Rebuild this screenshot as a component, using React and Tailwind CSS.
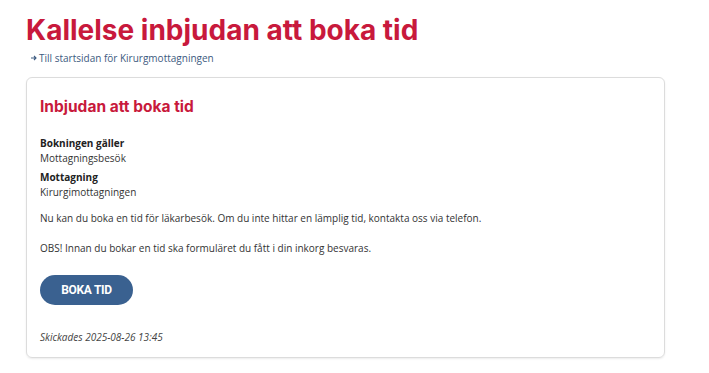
export default function App() {
  return (
    <div className="min-h-screen bg-white px-[26px] pt-[11px] font-['Open_Sans',sans-serif] text-[#333]">
      <h1 className="font-['Inter',sans-serif] text-[28px] font-bold leading-[38px] text-[#c8193c]">
        Kallelse inbjudan att boka tid
      </h1>
      <a href="#" className="ml-[5px] mt-[2px] flex items-center gap-[2px] text-[10px] leading-[14px] text-[#3d5a80]">
        <svg width="6" height="6" viewBox="0 0 6 6" fill="none" stroke="currentColor" strokeWidth="1.1">
          <path d="M0 3h5M3 1l2 2-2 2" />
        </svg>
        Till startsidan för Kirurgmottagningen
      </a>

      <div className="mt-[12px] w-[639px] rounded-[6px] border border-[#dcdcdc] px-[13px] pb-[12px] pt-[18px] shadow-[0_1px_2px_rgba(0,0,0,0.08)]">
        <h2 className="font-['Inter',sans-serif] text-[15.5px] font-bold leading-[22px] text-[#c8193c]">
          Inbjudan att boka tid
        </h2>

        <dl className="mt-[18px] text-[10px] leading-[15px]">
          <dt className="font-bold text-[#222]">Bokningen gäller</dt>
          <dd>Mottagningsbesök</dd>
          <dt className="mt-[4px] font-bold text-[#222]">Mottagning</dt>
          <dd>Kirurgimottagningen</dd>
        </dl>

        <p className="mt-[11px] text-[10px] leading-[15px]">
          Nu kan du boka en tid för läkarbesök. Om du inte hittar en lämplig tid, kontakta oss via telefon.
        </p>
        <p className="mt-[15px] text-[10px] leading-[15px]">
          OBS! Innan du bokar en tid ska formuläret du fått i din inkorg besvaras.
        </p>

        <button className="mt-[19px] h-[30px] w-[93px] rounded-full bg-[#3a6190] font-['Roboto',sans-serif] text-[12px] font-bold tracking-[-0.3px] text-white">
          BOKA TID
        </button>

        <p className="mt-[25px] text-[10px] italic leading-[15px] text-[#444]">
          Skickades 2025-08-26 13:45
        </p>
      </div>
    </div>
  );
}
